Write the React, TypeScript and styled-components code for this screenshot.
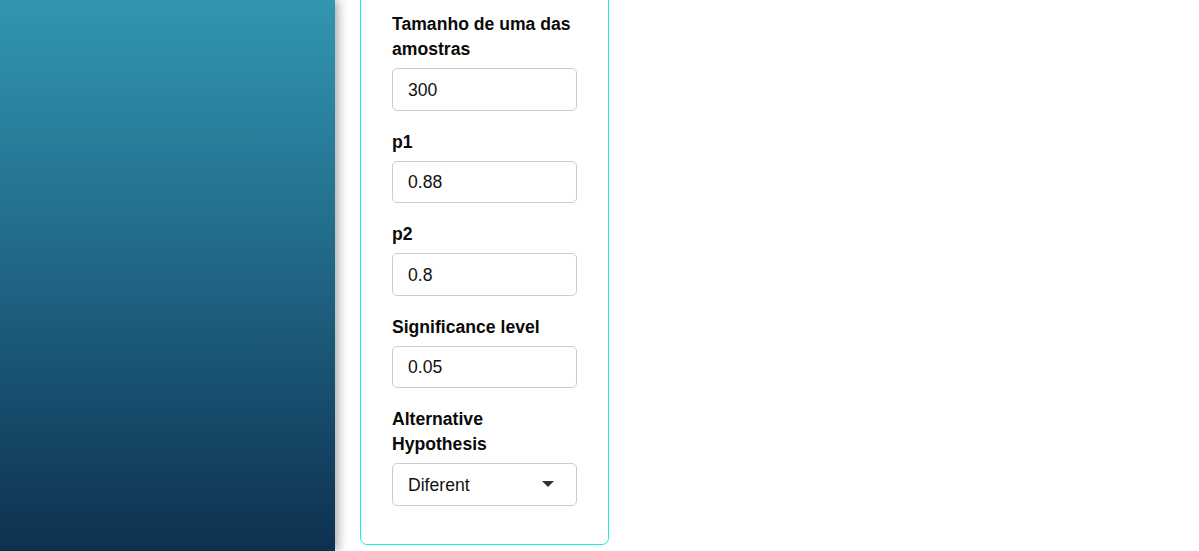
import React, { useState } from "react";
import styled, { createGlobalStyle } from "styled-components";

const GlobalStyle = createGlobalStyle`
  html, body {
    margin: 0;
    padding: 0;
    background: #ffffff;
    overflow: hidden;
  }
  * {
    box-sizing: border-box;
  }
`;

const Page = styled.div`
  display: flex;
  width: 1199px;
  height: 551px;
  overflow: hidden;
  font-family: "Liberation Sans", Arial, sans-serif;
  color: #111;
`;

const Sidebar = styled.aside`
  width: 335px;
  flex-shrink: 0;
  height: 100%;
  background: linear-gradient(180deg, #3296ae 0%, #236f8e 40%, #0e3050 100%);
  box-shadow: 3px 0 10px rgba(0, 0, 0, 0.35);
  position: relative;
  z-index: 1;
`;

const Main = styled.main`
  flex: 1;
  padding-left: 25px;
`;

const Card = styled.form`
  width: 249px;
  margin-top: -21px;
  padding: 32px 31px 19px;
  border: 1px solid #16f0d6;
  border-radius: 7px;
  background: #fff;
`;

const Field = styled.div`
  margin-bottom: 19px;
`;

const Label = styled.label`
  display: block;
  font-size: 17.6px;
  font-weight: 700;
  line-height: 25px;
  margin-bottom: 6px;
  color: #0a0a0a;
`;

const Input = styled.input`
  display: block;
  width: 185px;
  height: 42.5px;
  padding: 2px 15px 0;
  border: 1px solid #cccccc;
  border-radius: 5px;
  font-family: "Liberation Sans", Arial, sans-serif;
  font-size: 17.6px;
  color: #111;
  background: #fff;
  outline: none;
`;

const SelectBox = styled.div`
  display: flex;
  align-items: center;
  justify-content: space-between;
  width: 185px;
  height: 42.5px;
  padding: 2px 22px 0 15px;
  border: 1px solid #cccccc;
  border-radius: 5px;
  font-size: 17.6px;
  color: #111;
  background: #fff;
`;

const Caret = styled.span`
  width: 0;
  height: 0;
  margin-top: -2px;
  border-left: 6px solid transparent;
  border-right: 6px solid transparent;
  border-top: 6px solid #333;
`;

function App() {
  const [values, setValues] = useState({
    n: "300",
    p1: "0.88",
    p2: "0.8",
    alpha: "0.05",
  });

  const set = (k: keyof typeof values) => (e: React.ChangeEvent<HTMLInputElement>) =>
    setValues((prev) => ({ ...prev, [k]: e.target.value }));

  return (
    <>
      <GlobalStyle />
      <Page>
        <Sidebar />
        <Main>
          <Card onSubmit={(e) => e.preventDefault()}>
            <Field>
              <Label>Tamanho de uma das amostras</Label>
              <Input value={values.n} onChange={set("n")} />
            </Field>
            <Field>
              <Label>p1</Label>
              <Input value={values.p1} onChange={set("p1")} />
            </Field>
            <Field>
              <Label>p2</Label>
              <Input value={values.p2} onChange={set("p2")} />
            </Field>
            <Field>
              <Label>Significance level</Label>
              <Input value={values.alpha} onChange={set("alpha")} />
            </Field>
            <Field>
              <Label>
                Alternative
                <br />
                Hypothesis
              </Label>
              <SelectBox>
                Diferent
                <Caret />
              </SelectBox>
            </Field>
          </Card>
        </Main>
      </Page>
    </>
  );
}

export default App;
